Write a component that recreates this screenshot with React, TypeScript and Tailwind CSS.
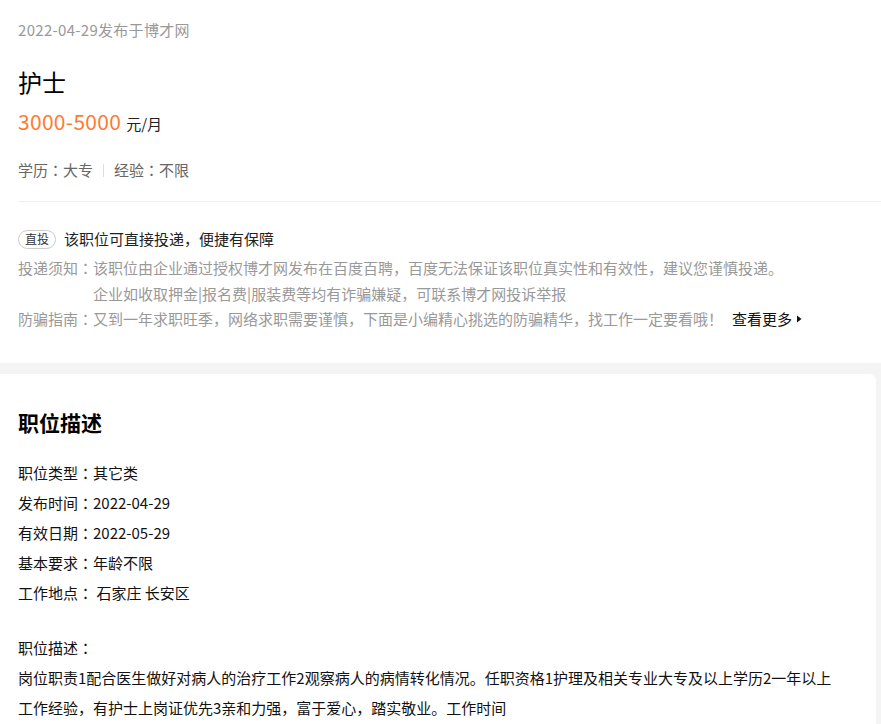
import React from "react";

const font = { fontFamily: '"Noto Sans CJK SC", "Noto Sans", sans-serif' };

function C() {
  return <span className="font-['Noto_Sans_CJK_JP',sans-serif]">：</span>;
}

export default function App() {
  return (
    <div className="min-h-[724px] w-[881px] bg-[#f4f4f4] text-[15px]" style={font}>
      <div className="bg-white pt-[20px] pb-[31px]">
        <div className="pl-[18px] leading-[20px] tracking-[0.3px] text-[#999]">2022-04-29发布于博才网</div>
        <div className="mt-[26px] pl-[18px] text-[24px] leading-[32px] text-black">护士</div>
        <div className="mt-[9px] flex items-baseline pl-[18px] leading-[28px]">
          <span className="text-[21px] tracking-[0.3px] text-[#ff7a33]">3000-5000</span>
          <span className="ml-[5px] text-[15px] text-[#222]">元/月</span>
        </div>
        <div className="mt-[22px] flex items-center pl-[18px] leading-[20px] text-[#666]">
          <span>学历<C />大专</span>
          <span className="mx-[10px] h-[13px] w-px bg-[#ddd]" />
          <span>经验<C />不限</span>
        </div>
        <div className="ml-[18px] mt-[21px] border-t border-[#eee]" />
        <div className="mt-[27px] flex items-center pl-[18px] leading-[20px]">
          <span className="flex h-[19px] w-[38px] items-center justify-center rounded-full border border-[#ccc] text-[12px] leading-none text-[#333]">
            直投
          </span>
          <span className="ml-[8px] text-[#222]">该职位可直接投递，便捷有保障</span>
        </div>
        <div className="mt-[6px] pl-[18px] leading-[25.5px] text-[#999]">
          <div className="flex">
            <span className="shrink-0">投递须知<C /></span>
            <div>
              <div>该职位由企业通过授权博才网发布在百度百聘，百度无法保证该职位真实性和有效性，建议您谨慎投递。</div>
              <div>企业如收取押金|报名费|服装费等均有诈骗嫌疑，可联系博才网投诉举报</div>
            </div>
          </div>
          <div className="flex items-center">
            <span className="shrink-0">防骗指南<C /></span>
            <span>又到一年求职旺季，网络求职需要谨慎，下面是小编精心挑选的防骗精华，找工作一定要看哦！</span>
            <span className="ml-[9px] text-[#111]">查看更多</span>
            <svg width="6" height="8" viewBox="0 0 6 8" className="ml-[4px]">
              <path d="M1 0.5 L5.5 4 L1 7.5 Z" fill="#111" />
            </svg>
          </div>
        </div>
      </div>
      <div className="mt-[11px] w-[876px] rounded-tr-[7px] bg-white pl-[18px] pr-[40px] pt-[33px] pb-[20px] text-[#111]">
        <div className="text-[21px] font-bold leading-[30px] text-black">职位描述</div>
        <div className="mt-[21px] leading-[30px]">
          <div>职位类型<C />其它类</div>
          <div>发布时间<C />2022-04-29</div>
          <div>有效日期<C />2022-05-29</div>
          <div>基本要求<C />年龄不限</div>
          <div>工作地点<C /> 石家庄 长安区</div>
        </div>
        <div className="mt-[25px] leading-[30px]">
          <div>职位描述<C /></div>
          <div>
            岗位职责1配合医生做好对病人的治疗工作2观察病人的病情转化情况。任职资格1护理及相关专业大专及以上学历2一年以上工作经验，有护士上岗证优先3亲和力强，富于爱心，踏实敬业。工作时间
          </div>
        </div>
      </div>
    </div>
  );
}
